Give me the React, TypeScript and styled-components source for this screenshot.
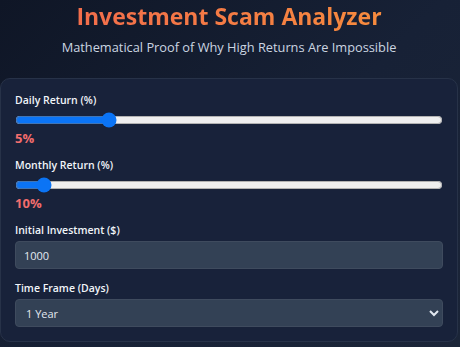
import styled, { createGlobalStyle } from "styled-components";
import { useState } from "react";

const GlobalStyle = createGlobalStyle`
  html, body {
    margin: 0;
    padding: 0;
    background: #111a2b;
  }
  body {
    font-family: "Open Sans", "Segoe UI", sans-serif;
    color: #f1f5f9;
  }
`;

/*---> Main Component <---*/
const App = () => {
    const [daily, setDaily] = useState(5);
    const [monthly, setMonthly] = useState(10);
    const [amount, setAmount] = useState("1000");
    const [days, setDays] = useState("365");

    return (
        <Page>
            <GlobalStyle />
            <Header>
                <Title>Investment Scam Analyzer</Title>
                <Subtitle>Mathematical Proof of Why High Returns Are Impossible</Subtitle>
            </Header>

            <Panel>
                <Field>
                    <Label>Daily Return (%)</Label>
                    <Slider
                        type="range"
                        min={0}
                        max={24}
                        step={0.1}
                        value={daily}
                        onChange={(e) => setDaily(Number(e.target.value))}
                    />
                    <Value>{daily}%</Value>
                </Field>

                <Field>
                    <Label>Monthly Return (%)</Label>
                    <Slider
                        type="range"
                        min={0}
                        max={200}
                        value={monthly}
                        onChange={(e) => setMonthly(Number(e.target.value))}
                    />
                    <Value>{monthly}%</Value>
                </Field>

                <Field>
                    <Label>Initial Investment ($)</Label>
                    <Input
                        type="number"
                        value={amount}
                        onChange={(e) => setAmount(e.target.value)}
                    />
                </Field>

                <Field>
                    <Label>Time Frame (Days)</Label>
                    <Select value={days} onChange={(e) => setDays(e.target.value)}>
                        <option value="30">1 Month</option>
                        <option value="90">3 Months</option>
                        <option value="180">6 Months</option>
                        <option value="365">1 Year</option>
                        <option value="730">2 Years</option>
                    </Select>
                </Field>
            </Panel>
        </Page>
    );
};

export default App;


const Page = styled.div`
    min-height: 347px;
    background: linear-gradient(135deg, #0f1626 0%, #172136 55%, #1b2538 100%);
    box-sizing: border-box;
    padding: 0 2px 4px 0;
`;

const Header = styled.header`
    text-align: center;
    height: 78px;
    box-sizing: border-box;
`;

const Title = styled.h1`
    margin: 0;
    font-size: 23px;
    font-weight: 700;
    line-height: 32px;
    background: linear-gradient(90deg, #f2664f 0%, #f7923a 100%);
    -webkit-background-clip: text;
    background-clip: text;
    color: transparent;
`;

const Subtitle = styled.p`
    margin: 6px 0 0;
    font-size: 12.8px;
    line-height: 18px;
    color: #cbd5e1;
`;

const Panel = styled.section`
    background: #18223a;
    border: 1px solid #273248;
    border-radius: 10px;
    padding: 13px 14px 14px;
    display: flex;
    flex-direction: column;
    gap: 11px;
`;

const Field = styled.div`
    display: flex;
    flex-direction: column;
`;

const Label = styled.label`
    font-size: 10.5px;
    font-weight: 600;
    color: #f1f5f9;
    line-height: 16px;
`;

const Slider = styled.input`
    width: 100%;
    margin: 4px 0 2px;
    accent-color: #0b74f5;
    height: 16px;
`;

const Value = styled.span`
    margin-top: 1px;
    font-size: 13px;
    font-weight: 700;
    color: #f26d6d;
    line-height: 15px;
`;

const Input = styled.input`
    margin-top: 3px;
    height: 28px;
    box-sizing: border-box;
    background: #334155;
    border: 1px solid #3f4b5e;
    border-radius: 4px;
    color: #e2e8f0;
    font-family: "Open Sans", sans-serif;
    font-size: 11px;
    padding: 0 8px;
    outline: none;
    appearance: textfield;
    &::-webkit-inner-spin-button,
    &::-webkit-outer-spin-button {
        -webkit-appearance: none;
        margin: 0;
    }
`;

const Select = styled.select`
    margin-top: 3px;
    height: 28px;
    box-sizing: border-box;
    background: #334155;
    border: 1px solid #3f4b5e;
    border-radius: 4px;
    color: #e2e8f0;
    font-family: "Open Sans", sans-serif;
    font-size: 11px;
    padding: 0 6px;
    outline: none;
`;
